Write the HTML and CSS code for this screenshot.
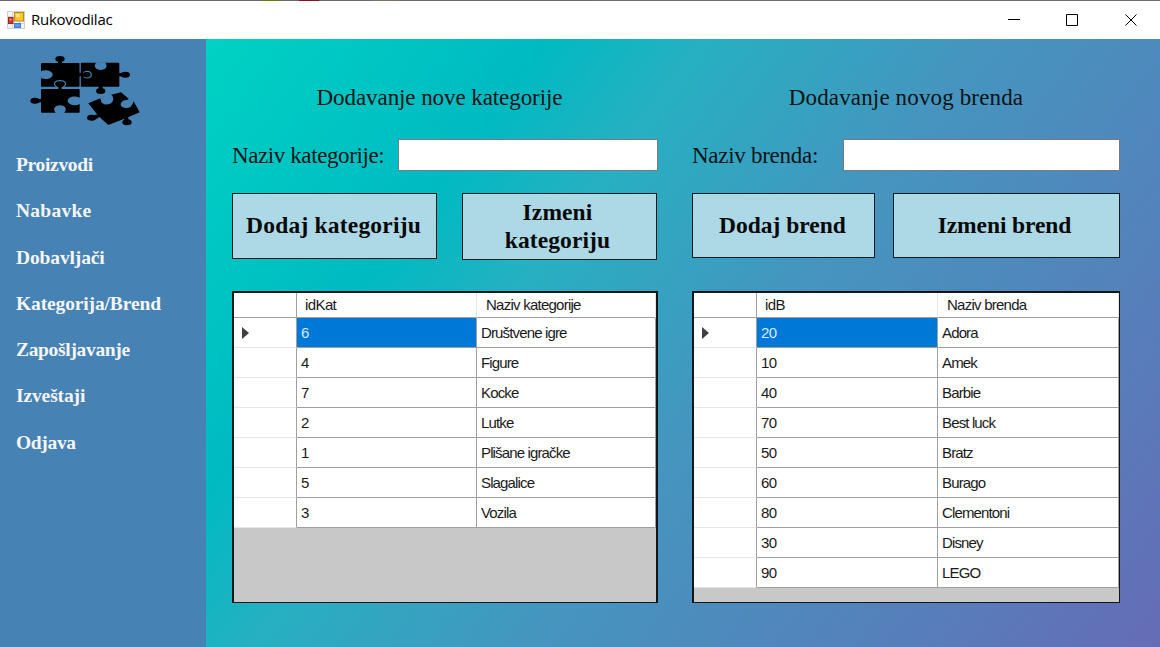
FILE: index.html
```html
<!DOCTYPE html>
<html lang="sr">
<head>
<meta charset="utf-8">
<title>Rukovodilac</title>
<link rel="stylesheet" href="styles.css">
</head>
<body>
<div class="window">
  <header class="titlebar">
    <svg class="app-icon" width="18" height="18" viewBox="0 0 18 18">
      <rect x=".5" y=".5" width="17" height="17" fill="#f3f3f3" stroke="#cfcfcf"/>
      <path d="M5.5 0v18M0 5.5h18M12.500 0v18M0 12.500h18" stroke="#d4d4d4" fill="none"/>
      <rect x="7.500" y="1.500" width="9" height="8.500" fill="#f7c52c" stroke="#b98b16"/>
      <rect x="9" y="3" width="4" height="3" fill="#ffe38a"/>
      <rect x="1.500" y="6.500" width="4.500" height="6" fill="#c93a30" stroke="#a3241e"/>
      <rect x="2.500" y="7.500" width="2" height="2" fill="#eb8b80"/>
      <rect x="7.500" y="12.500" width="6" height="4" fill="#5b9bf3" stroke="#3d7bd8"/>
    </svg>
    <span class="caption">Rukovodilac</span>
    <svg class="controls" width="132" height="14" viewBox="0 0 132 14" fill="none" stroke="#000">
      <path d="M0 6.500h12" shape-rendering="crispEdges"/>
      <path d="M58.500 1.500h11v11h-11z"/>
      <path d="M117.500 1.500l11 11M128.500 1.500l-11 11"/>
    </svg>
  </header>
  <div class="body">
    <aside class="sidebar">
      <svg class="logo" width="130" height="80" viewBox="0 0 390 240">
        <g fill="#000">
          <rect x="63" y="39" width="116" height="71" rx="3"/>
          <path d="M114 42V34h12v8z"/><ellipse cx="120" cy="27" rx="14" ry="9"/>
          <rect x="182" y="38" width="116" height="72" rx="3"/>
          <path d="M296 69h10v10h-10zM236 108h12v10h-12z"/>
          <ellipse cx="316" cy="74" rx="14" ry="9"/><ellipse cx="242" cy="123" rx="14" ry="9"/>
          <rect x="63" y="117" width="116" height="71" rx="3"/>
          <path d="M53 147h12v10H53z"/><ellipse cx="45" cy="152" rx="14" ry="9"/>
          <path d="M205 160L241 145L262 137L303 127L326 146L340 152L359 187L321 203L265 225L236 199z"/>
          <path d="M228 193l12 6-10 8-10-6zM310 204l14-5 2 12-10 2z"/>
          <ellipse cx="215" cy="203" rx="14" ry="9"/><ellipse cx="321" cy="217" rx="14" ry="9"/>
        </g>
        <g fill="#4682b4">
          <path d="M62 64C82 56 98 66 98 74S82 93 62 84z"/>
          <path d="M229 37h26C266 50 256 60 242 60S218 50 229 37z"/>
          <path d="M180 143C160 134 143 143 143 152S160 171 180 162z"/>
          <path d="M107 189C96 176 106 166 120 166S143 176 133 189z"/>
          <path d="M239 142L263 132L276 136C284 148 278 161 266 163S242 160 243 150z"/>
          <path d="M326 145L345 151C338 154 339 165 332 170S310 176 304 169S306 153 314 151S326 150 326 145z"/>
        </g>
        <g fill="none" stroke="#4682b4" stroke-width="3.500">
          <path d="M110 111C96 99 106 92 120 92S144 99 130 111"/>
          <path d="M190 68C200 60 214 65 214 74S200 88 190 80"/>
          <path d="M180.500 38v28M180.500 82v28" stroke-width="2"/>
          <path d="M63 113.500h47M130 113.500h49" stroke-width="4"/>
        </g>
        <path d="M115 109h10v11h-10zM176 70h14v8h-14z"/>
        <ellipse cx="120" cy="104" rx="11" ry="7"/><ellipse cx="199" cy="74" rx="11" ry="7"/>
      </svg>
      <nav class="menu">
        <a class="tight">Proizvodi</a><a class="loose">Nabavke</a><a>Dobavljači</a><a>Kategorija/Brend</a><a class="tight">Zapošljavanje</a><a>Izveštaji</a><a class="tight">Odjava</a>
      </nav>
    </aside>
    <main class="content">
      <section class="panel category">
        <h2>Dodavanje nove kategorije</h2>
        <div class="field"><label>Naziv kategorije:</label><input type="text"></div>
        <div class="actions"><button>Dodaj kategoriju</button><button>Izmeni<br>kategoriju</button></div>
        <div class="grid">
          <div class="row head"><i></i><span>idKat</span><span>Naziv kategorije</span></div>
          <div class="row current"><i></i><span>6</span><span>Društvene igre</span></div>
          <div class="row"><i></i><span>4</span><span>Figure</span></div>
          <div class="row"><i></i><span>7</span><span>Kocke</span></div>
          <div class="row"><i></i><span>2</span><span>Lutke</span></div>
          <div class="row"><i></i><span>1</span><span>Plišane igračke</span></div>
          <div class="row"><i></i><span>5</span><span>Slagalice</span></div>
          <div class="row"><i></i><span>3</span><span>Vozila</span></div>
        </div>
      </section>
      <section class="panel brand">
        <h2>Dodavanje novog brenda</h2>
        <div class="field"><label>Naziv brenda:</label><input type="text"></div>
        <div class="actions"><button>Dodaj brend</button><button>Izmeni brend</button></div>
        <div class="grid">
          <div class="row head"><i></i><span>idB</span><span>Naziv brenda</span></div>
          <div class="row current"><i></i><span>20</span><span>Adora</span></div>
          <div class="row"><i></i><span>10</span><span>Amek</span></div>
          <div class="row"><i></i><span>40</span><span>Barbie</span></div>
          <div class="row"><i></i><span>70</span><span>Best luck</span></div>
          <div class="row"><i></i><span>50</span><span>Bratz</span></div>
          <div class="row"><i></i><span>60</span><span>Burago</span></div>
          <div class="row"><i></i><span>80</span><span>Clementoni</span></div>
          <div class="row"><i></i><span>30</span><span>Disney</span></div>
          <div class="row"><i></i><span>90</span><span>LEGO</span></div>
        </div>
      </section>
    </main>
  </div>
</div>
</body>
</html>
```
FILE: styles.css
```css
* { box-sizing: border-box; }
body { margin: 0; }
.window { width: 1160px; height: 647px; display: flex; flex-direction: column; overflow: hidden; }

.titlebar {
  height: 39px; padding: 0 20px 0 7px; display: flex; align-items: center;
  background: linear-gradient(90deg, #686b76 261px, #7a7410 261px 281px, #686b76 281px 299px, #84141c 299px 319px, #686b76 319px 372px, #7b725f 372px 399px, #686b76 399px 594px, #737070 594px) 0 0 / 100% 1px no-repeat #fff;
}
.caption { margin-left: 6px; padding-bottom: 2px; font: 15px/20px "Open Sans", sans-serif; letter-spacing: -.25px; color: #000; }
.controls { margin-left: auto; }

.body { flex: 1; display: flex; }
.sidebar { width: 206px; background: #4682b4; padding: 11px 0 0; }
.logo { display: block; margin-left: 20px; }
.menu { display: flex; flex-direction: column; padding: 12px 0 0 16px; }
.menu a { height: 46.3px; font: bold 19.500px/46px "Liberation Serif", serif; letter-spacing: -.13px; color: #f5f5f5; }
.menu .tight { letter-spacing: -.33px; }
.menu .loose { letter-spacing: .25px; }

.content {
  flex: 1; display: flex; gap: 34px; padding: 40px 0 0 26px;
  background: linear-gradient(126.7deg, #00d2c4 0, #00bac2 274px, #26b0c2 398px, #4595bf 621px, #5482bb 877px, #656cb6 1127px);
}
.category { width: 426px; }
.brand { width: 428px; }
.panel { font-family: "Liberation Serif", serif; color: #061417; }
h2 { margin: 0; height: 60px; font-size: 23px; line-height: 38px; font-weight: normal; text-align: center; }
.category h2 { padding-right: 11px; letter-spacing: -.08px; }
.brand h2 { letter-spacing: .14px; }
.field { display: flex; height: 54px; }
.field label { font-size: 23px; line-height: 34px; letter-spacing: -.4px; white-space: nowrap; }
.brand .field label { letter-spacing: -.28px; }
.field input { margin-left: auto; height: 32px; padding: 0; border: 1px solid #7a7a7a; background: #fff; }
.category input { width: 260px; }
.brand input { width: 277px; }
.actions { display: flex; gap: 25px; align-items: flex-start; height: 98px; }
.brand .actions { gap: 18px; }
button { height: 66px; padding: 0 2px 1px 0; border: 1.500px solid #0d1a1e; background: #add8e6; font: bold 23.500px/28px "Liberation Serif", serif; color: #0a0a0a; }
.category button { width: 205px; padding-bottom: 2px; letter-spacing: .2px; }
.category button + button { width: 195px; height: 67px; padding: 0 4px 1px 0; letter-spacing: .1px; }
.brand button { width: 183px; height: 65px; }
.brand button + button { width: 227px; padding-right: 4px; letter-spacing: -.1px; }

.grid { height: 312px; border: 1px solid #101619; border-width: 2px 2px 1px 2px; background: #c8c8c8; font: 15px/29px "Liberation Sans", sans-serif; letter-spacing: -.86px; color: #1a1a1a; }
.brand .grid { border-right-width: 1px; }
.row { display: grid; grid-template-columns: 63px 180px 179px; height: 30px; background: #fff; }
.brand .row { grid-template-columns: 63px 181px 181px; }
.row > * { border-right: 1px solid #a0a0a0; border-bottom: 1px solid #a0a0a0; padding-left: 4px; white-space: nowrap; }
.row > i { border-bottom-color: #e5e5e5; display: flex; align-items: center; }
.row > i + span { letter-spacing: -.6px; }
.row.head { height: 25px; line-height: 23px; letter-spacing: -.75px; }
.row.head > * { border-bottom-color: #a0a0a0; padding-left: 8px; }
.row.head > span + span { padding-left: 9px; }
.row.head > span { border-right-color: #e5e5e5; }
.current i::before { content: ""; margin-left: 4px; border: solid transparent; border-width: 6px 0 6px 7px; border-left-color: #404040; }
.current i + span { background: #0078d7; color: #d5ebff; }
```
